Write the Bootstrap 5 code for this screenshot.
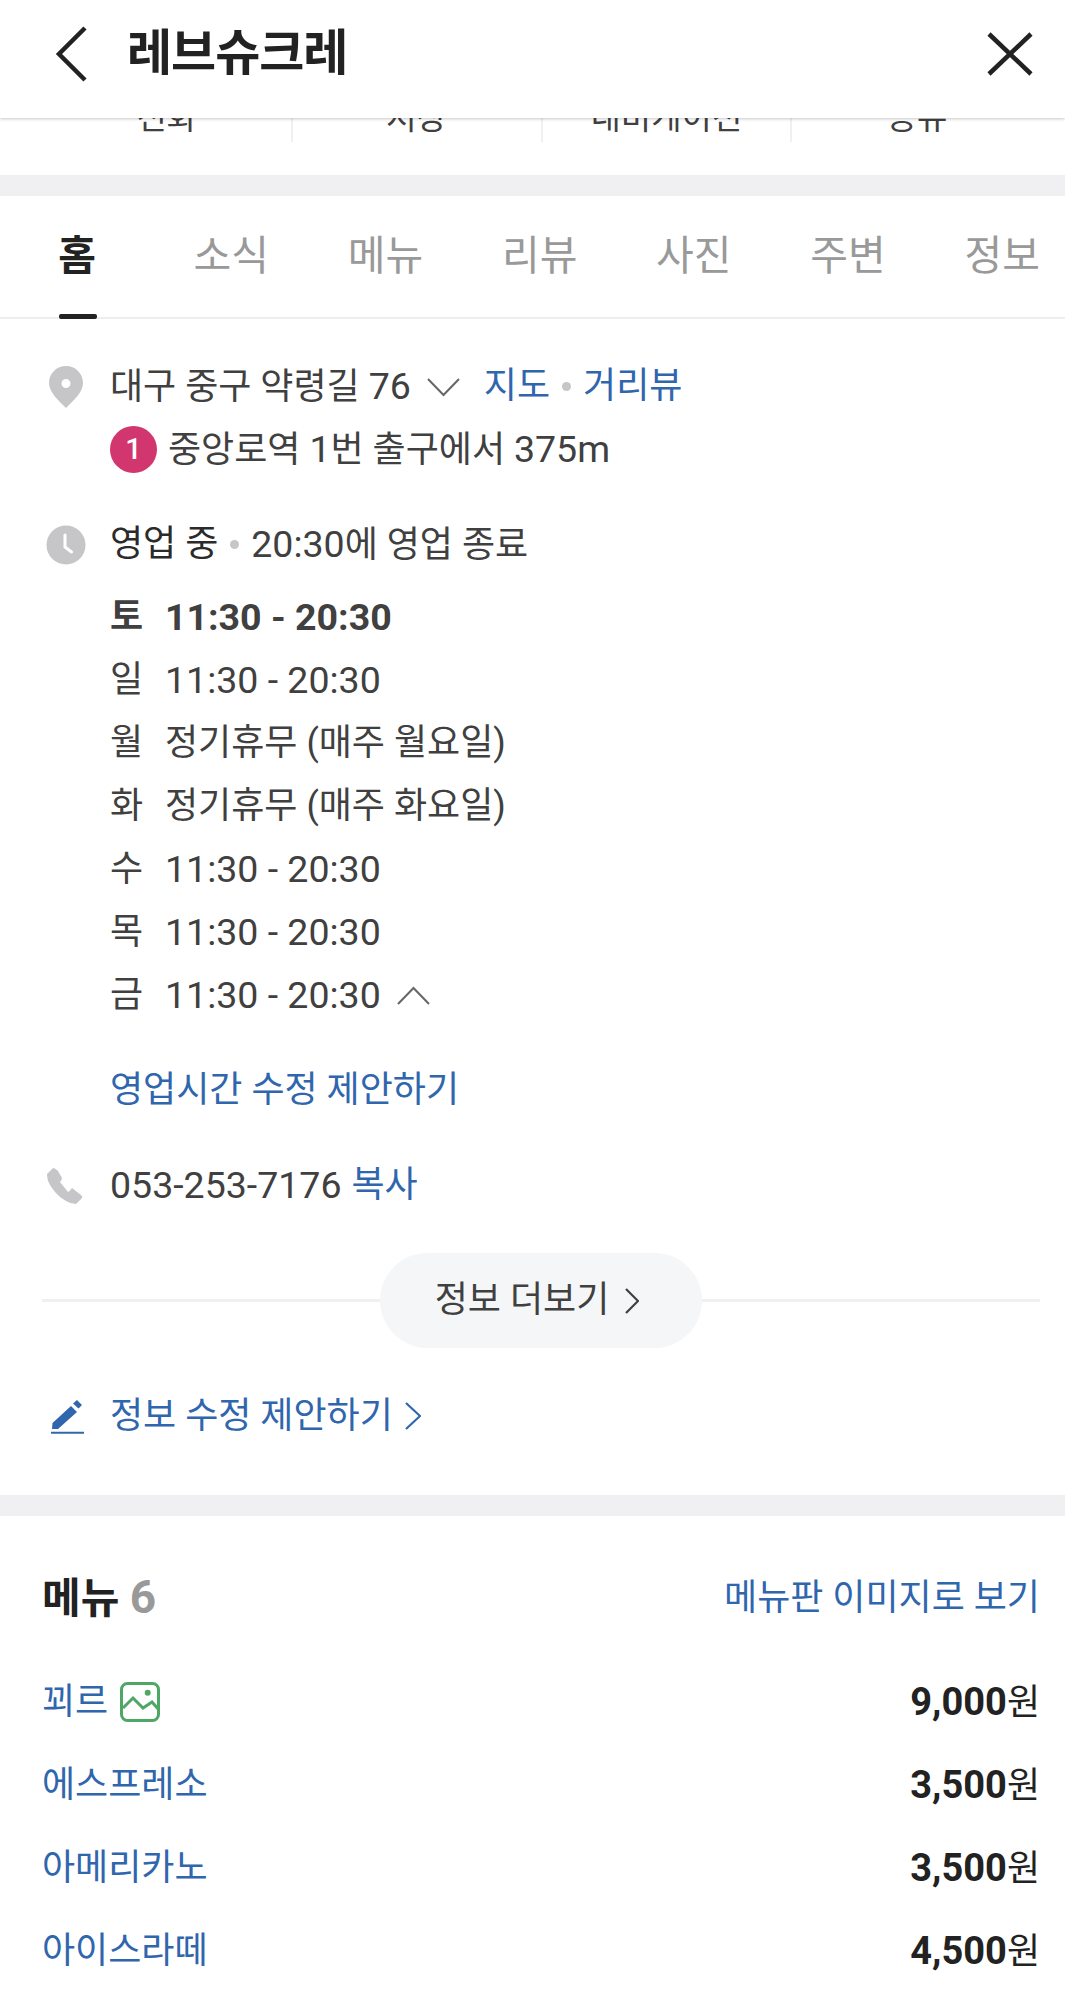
<!DOCTYPE html>
<html lang="ko">
<head>
    <meta charset="UTF-8">
    <meta name="viewport" content="width=device-width, initial-scale=1.0">
    <title>레브슈크레</title>
    <link rel="stylesheet" href="https://cdn.jsdelivr.net/npm/bootstrap@5.3.0/dist/css/bootstrap.min.css">
    <style>
        body { background: #fff; color: #404040; font-family: Roboto, "Noto Sans CJK KR", sans-serif; font-size: 36px; line-height: 1.3; overflow: hidden; }
        a { color: #2f66ad; text-decoration: none; }
        svg { display: block; flex-shrink: 0; }
        .top-bar { height: 118px; padding: 0 32px 10px 55px; position: relative; z-index: 2; background: #fff; box-shadow: 0 1px 3px rgba(0,0,0,.22); }
        .top-title { font-size: 49px; font-weight: 700; color: #222; margin-left: 38px; letter-spacing: -1px; }
        .action-clip { height: 57px; overflow: hidden; padding: 0 23px 0 43px; }
        .action-cell { width: 250px; text-align: center; font-size: 33px; line-height: 44px; margin-top: -22px; height: 46px; border-right: 2px solid #f0f0f0; }
        .action-cell:last-child { border-right: 0; }
        .band { height: 21px; background: #f0f0f2; }
        .tab-row { height: 123px; border-bottom: 2px solid #eee; }
        .tab-item { width: 154.2px; flex-shrink: 0; text-align: center; font-size: 41px; color: #999; padding-top: 34px; position: relative; }
        .tab-item.now { color: #222; font-weight: 700; }
        .tab-item.now::after { content: ""; position: absolute; left: 59px; bottom: -2px; width: 38px; height: 5px; background: #222; border-radius: 2px; }
        .info-wrap { padding: 0 25px 0 42px; }
        .info-line { display: flex; align-items: center; height: 63px; padding-left: 68px; position: relative; white-space: nowrap; }
        .info-icon { position: absolute; left: 0; }
        .sep-dot { width: 9px; height: 9px; border-radius: 50%; background: #c6c6c8; margin: 0 12px; }
        .sub-num { width: 47px; height: 47px; border-radius: 50%; background: #d1366e; color: #fff; font-size: 29px; font-weight: 500; text-align: center; line-height: 47px; margin-right: 11px; }
        .day-name { width: 55px; }
        .digits { font-size: 37.5px; }
        .open-now { color: #2b2b2b; }
        .copy-link { margin-left: 10px; }
        .more-row { height: 95px; position: relative; }
        .more-row::before { content: ""; position: absolute; left: 0; right: 0; top: 46px; height: 3px; background: #f0f0f0; }
        .more-pill { position: relative; width: 322px; height: 95px; padding-right: 8px; border-radius: 48px; background: #f5f6f8; color: #404040; font-size: 36px; }
        .edit-link { column-gap: 12px; }
        .menu-wrap { padding: 0 25px 0 42px; }
        .menu-head { height: 82px; margin-top: 41px; margin-bottom: 22px; }
        .menu-title { font-size: 42px; font-weight: 700; color: #222; }
        .menu-count { font-size: 46px; color: #999; font-weight: 700; }
        .menu-line { height: 83px; }
        .photo-link { column-gap: 12px; }
        .menu-price { font-size: 38px; font-weight: 700; color: #222; }
        .menu-price span { font-size: 36px; font-weight: 400; }
    </style>
</head>
<body>

    <!-- Header -->
    <div class="top-bar d-flex align-items-center">
        <svg width="34" height="56" viewBox="0 0 34 56" fill="none" stroke="#222" stroke-width="4.5"><path d="M30 2 4 28l26 26"/></svg>
        <div class="top-title flex-grow-1">레브슈크레</div>
        <svg width="46" height="44" viewBox="0 0 46 44" fill="none" stroke="#222" stroke-width="4.5"><path d="M2 2l42 40M44 2 2 42"/></svg>
    </div>

    <!-- Actions, scrolled under the header -->
    <div class="action-clip">
        <div class="d-flex">
            <div class="action-cell">전화</div>
            <div class="action-cell">저장</div>
            <div class="action-cell">내비게이션</div>
            <div class="action-cell">공유</div>
        </div>
    </div>
    <div class="band"></div>

    <!-- Tabs -->
    <div class="tab-row d-flex">
        <div class="tab-item now">홈</div>
        <div class="tab-item">소식</div>
        <div class="tab-item">메뉴</div>
        <div class="tab-item">리뷰</div>
        <div class="tab-item">사진</div>
        <div class="tab-item">주변</div>
        <div class="tab-item">정보</div>
    </div>

    <!-- Place info -->
    <div class="info-wrap" style="padding-top:36px">
        <div class="info-line">
            <svg class="info-icon" style="left:6px" width="36" height="42" viewBox="0 0 36 42"><path fill="#c6c6c8" fill-rule="evenodd" d="M18 0C8.500 0 1 7.500 1 17c0 9 9 17 17 25 8-8 17-16 17-25C35 7.500 27.500 0 18 0Zm0 13a4.500 4.500 0 1 1 0 9 4.500 4.500 0 0 1 0-9Z"/></svg>
            <span>대구 중구 약령길 <span class="digits">76</span></span>
            <svg class="ms-3" width="33" height="20" viewBox="0 0 33 20" fill="none" stroke="#666" stroke-width="2"><path d="M1 2l15.500 16L32 2"/></svg>
            <a class="ms-4" href="#">지도</a><i class="sep-dot"></i><a href="#">거리뷰</a>
        </div>
        <div class="info-line">
            <span class="sub-num">1</span><span>중앙로역 <span class="digits">1</span>번 출구에서 <span class="digits">375m</span></span>
        </div>
        <div class="info-line" style="margin-top:32px;margin-bottom:10px">
            <svg class="info-icon" style="left:4px" width="40" height="40" viewBox="0 0 40 40"><circle cx="20" cy="20" r="19.500" fill="#c6c6c8"/><path d="M19 10v12l6.500 5" fill="none" stroke="#fff" stroke-width="3" stroke-linecap="round"/></svg>
            <span class="open-now">영업 중</span><i class="sep-dot"></i><span><span class="digits">20:30</span>에 영업 종료</span>
        </div>
        <div class="info-line fw-bold"><span class="day-name">토</span><span class="digits">11:30 - 20:30</span></div>
        <div class="info-line"><span class="day-name">일</span><span class="digits">11:30 - 20:30</span></div>
        <div class="info-line"><span class="day-name">월</span><span>정기휴무 (매주 월요일)</span></div>
        <div class="info-line"><span class="day-name">화</span><span>정기휴무 (매주 화요일)</span></div>
        <div class="info-line"><span class="day-name">수</span><span class="digits">11:30 - 20:30</span></div>
        <div class="info-line"><span class="day-name">목</span><span class="digits">11:30 - 20:30</span></div>
        <div class="info-line"><span class="day-name">금</span><span class="digits">11:30 - 20:30</span>
            <svg class="ms-3" width="33" height="20" viewBox="0 0 33 20" fill="none" stroke="#666" stroke-width="2"><path d="M1 18 16.500 2 32 18"/></svg>
        </div>
        <div class="info-line" style="margin-top:32px"><a href="#">영업시간 수정 제안하기</a></div>
        <div class="info-line" style="margin-top:32px">
            <svg class="info-icon" style="left:5px" width="36" height="36" viewBox="0 0 36 36"><path fill="#c6c6c8" d="M0 6 6 0q2 0 5 3l4 7q0 2-2 4l8 10q2-1 4-4l9 7q2 1 1 3l-6 6q-5 0-10-3-6-3-11-9-5-6-7-11-1-4-1-7Z"/></svg>
            <span class="digits">053-253-7176</span><a class="copy-link" href="#">복사</a>
        </div>
        <div class="more-row d-flex justify-content-center" style="margin-top:36px">
            <div class="more-pill d-flex align-items-center justify-content-center gap-3">정보 더보기
                <svg width="14" height="26" viewBox="0 0 14 26" fill="none" stroke="#404040" stroke-width="2.200"><path d="M1 1l12 12L1 25"/></svg>
            </div>
        </div>
        <div class="info-line" style="margin-top:37px">
            <svg class="info-icon" style="left:9px" width="33" height="34" viewBox="0 0 33 34"><path fill="#2f66ad" d="M1 29l.5-6L20 6l6 6L7 29ZM22 3.500 26 0l5 5-3.500 3.500Z"/><path d="M0 32.700h33" stroke="#2f66ad" stroke-width="2"/></svg>
            <a class="edit-link d-flex align-items-center" href="#">정보 수정 제안하기
                <svg width="16" height="28" viewBox="0 0 16 28" fill="none" stroke="#2f66ad" stroke-width="2.200"><path d="M1 1l14 13L1 27"/></svg>
            </a>
        </div>
    </div>

    <div class="band" style="margin-top:47px"></div>

    <!-- Menu -->
    <div class="menu-wrap">
        <div class="menu-head d-flex justify-content-between align-items-center">
            <div class="menu-title">메뉴 <span class="menu-count">6</span></div>
            <a href="#">메뉴판 이미지로 보기</a>
        </div>
        <div class="menu-line d-flex justify-content-between align-items-center">
            <a class="photo-link d-flex align-items-center" href="#">꾀르
                <svg width="40" height="40" viewBox="0 0 40 40" fill="none" stroke="#4fa765" stroke-width="3"><rect x="1.500" y="1.500" width="37" height="37" rx="6"/><path d="M3 26l10-10 10 10 9-6 7 8"/><circle cx="27.700" cy="10.700" r="1.500" fill="#4fa765"/></svg>
            </a>
            <span class="menu-price">9,000<span>원</span></span>
        </div>
        <div class="menu-line d-flex justify-content-between align-items-center"><a href="#">에스프레소</a><span class="menu-price">3,500<span>원</span></span></div>
        <div class="menu-line d-flex justify-content-between align-items-center"><a href="#">아메리카노</a><span class="menu-price">3,500<span>원</span></span></div>
        <div class="menu-line d-flex justify-content-between align-items-center"><a href="#">아이스라떼</a><span class="menu-price">4,500<span>원</span></span></div>
    </div>

    <script src="https://cdn.jsdelivr.net/npm/bootstrap@5.3.0/dist/js/bootstrap.bundle.min.js"></script>
</body>
</html>
